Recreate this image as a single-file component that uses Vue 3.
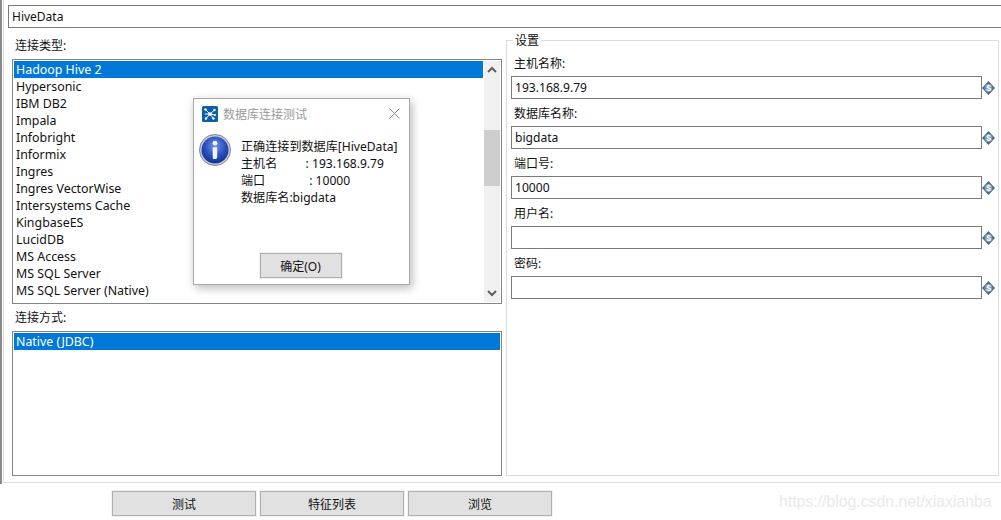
<script setup>
const types = ['Hadoop Hive 2','Hypersonic','IBM DB2','Impala','Infobright','Informix','Ingres','Ingres VectorWise','Intersystems Cache','KingbaseES','LucidDB','MS Access','MS SQL Server','MS SQL Server (Native)']
const fields = [
  { label: '主机名称:', value: '193.168.9.79' },
  { label: '数据库名称:', value: 'bigdata' },
  { label: '端口号:', value: '10000' },
  { label: '用户名:', value: '' },
  { label: '密码:', value: '' }
]
const buttons = ['测试', '特征列表', '浏览']
const message = [
  '正确连接到数据库[HiveData]',
  '主机名         : 193.168.9.79',
  '端口              : 10000',
  '数据库名:bigdata'
]
</script>

<template>
  <div class="page">
    <div class="edge">
      <div class="panel">
        <div class="name-input">HiveData</div>
        <div class="columns">
          <div class="left">
            <div class="label">连接类型:</div>
            <div class="list types">
              <div class="rows">
                <div v-for="(t, i) in types" :key="t" class="row" :class="{ sel: i === 0 }">{{ t }}</div>
              </div>
              <div class="scrollbar">
                <svg class="arrow" width="16" height="18" viewBox="0 0 16 18"><path d="M4 11 L8 7 L12 11" fill="none" stroke="#606060" stroke-width="2"/></svg>
                <div class="track"><div class="thumb"></div></div>
                <svg class="arrow" width="16" height="18" viewBox="0 0 16 18"><path d="M4 7 L8 11 L12 7" fill="none" stroke="#606060" stroke-width="2"/></svg>
              </div>
            </div>
            <div class="label second">连接方式:</div>
            <div class="list methods">
              <div class="rows">
                <div class="row sel">Native (JDBC)</div>
              </div>
            </div>
          </div>
          <div class="group">
            <div class="legend">设置</div>
            <div v-for="f in fields" :key="f.label" class="field">
              <div class="field-label">{{ f.label }}</div>
              <div class="field-line">
                <div class="field-input">{{ f.value }}</div>
                <svg class="var" width="13" height="14" viewBox="0 0 13 14">
                  <path d="M6.5 0 L13 7 L6.5 14 L0 7 Z" fill="#46698a"/>
                  <circle cx="6.5" cy="7" r="3.9" fill="#7f9ab2"/>
                  <text x="6.5" y="10" text-anchor="middle" font-size="8.5" font-weight="700" fill="#fff" font-family="Liberation Sans, sans-serif">$</text>
                </svg>
              </div>
            </div>
          </div>
        </div>
      </div>
    </div>

    <div class="actions">
      <button v-for="b in buttons" :key="b" class="btn">{{ b }}</button>
    </div>

    <div class="watermark">https://blog.csdn.net/xiaxianba</div>

    <div class="dialog">
      <div class="titlebar">
        <svg class="logo" width="16" height="16" viewBox="0 0 16 16">
          <rect width="16" height="16" rx="1.5" fill="#0b5ea8"/>
          <g stroke="#fff" stroke-width="1">
            <path d="M8 8 L3.5 3.5 M8 8 L12.5 4 M8 8 L13 9 M8 8 L4 12.5 M8 8 L11.5 12.5 M8 8 L2.8 8"/>
          </g>
          <g fill="#fff">
            <circle cx="8" cy="8" r="1.8"/><circle cx="3.5" cy="3.5" r="1.2"/><circle cx="12.5" cy="4" r="1.2"/>
            <circle cx="13" cy="9" r="1"/><circle cx="4" cy="12.5" r="1.2"/><circle cx="11.5" cy="12.5" r="1.2"/>
          </g>
        </svg>
        <span class="title">数据库连接测试</span>
        <svg class="close" width="11" height="11" viewBox="0 0 11 11"><path d="M0.5 0.5 L10.5 10.5 M10.5 0.5 L0.5 10.5" stroke="#8c8c8c" stroke-width="1" fill="none"/></svg>
      </div>
      <div class="message">
        <svg class="info" width="32" height="32" viewBox="0 0 32 32">
          <defs>
            <radialGradient id="ball" cx="50%" cy="35%" r="70%">
              <stop offset="0%" stop-color="#6f94e6"/>
              <stop offset="55%" stop-color="#2a50bd"/>
              <stop offset="100%" stop-color="#0d2a86"/>
            </radialGradient>
          </defs>
          <circle cx="16" cy="16" r="15.5" fill="#c7ccd6" stroke="#7c8494" stroke-width="1"/>
          <circle cx="16" cy="16" r="13.5" fill="url(#ball)"/>
          <circle cx="16" cy="9.2" r="2.4" fill="#f2f4fa"/>
          <path d="M13.6 13.2 H18.2 V23.4 C18.2 25 16 25.2 14.8 25 C14 24.8 13.8 24.2 13.8 23.4 Z" fill="#f2f4fa"/>
        </svg>
        <div class="msg-text">
          <div v-for="m in message" :key="m">{{ m }}</div>
        </div>
      </div>
      <div class="dialog-foot">
        <button class="ok">确定(O)</button>
      </div>
    </div>
  </div>
</template>

<style scoped>
.page {
  position: relative;
  width: 1001px;
  height: 520px;
  overflow: hidden;
  background: #fff;
  color: #111;
  font-family: "Noto Sans", "Noto Sans CJK SC", sans-serif;
  font-size: 12.4px;
}
.edge {
  border-left: 2px solid #8a8a8a;
  height: 484px;
  box-sizing: border-box;
  padding-left: 1px;
}
.panel {
  height: 483px;
  box-sizing: border-box;
  border-left: 1px solid #dcdcdc;
  border-bottom: 1px solid #dcdcdc;
  padding: 5px 0 0 4px;
}
.name-input {
  height: 23px;
  box-sizing: border-box;
  border: 1px solid #7a7a7a;
  border-right: none;
  padding-left: 3px;
  line-height: 21px;
  font-size: 12px;
}
.columns {
  display: flex;
  gap: 4px;
  margin-top: 9px;
  margin-left: 4px;
}
.left {
  width: 490px;
  display: flex;
  flex-direction: column;
}
.label {
  height: 17px;
  line-height: 17px;
  font-size: 12px;
  padding-left: 3px;
  margin-bottom: 5px;
}
.label.second {
  margin-top: 5px;
  margin-bottom: 5px;
}
.list {
  box-sizing: border-box;
  border: 1px solid #82878c;
  padding: 1px;
  display: flex;
}
.types { height: 245px; }
.methods { height: 145px; }
.rows {
  flex: 1;
  min-width: 0;
  overflow: hidden;
}
.row {
  height: 17px;
  line-height: 17px;
  padding-left: 2px;
}
.row.sel {
  background: #0078d7;
  color: #fff;
}
.scrollbar {
  width: 16px;
  margin-left: 1px;
  background: #f0f0f0;
  display: flex;
  flex-direction: column;
}
.arrow { display: block; flex: none; }
.track {
  flex: 1;
  padding-top: 51px;
}
.thumb {
  height: 56px;
  background: #cdcdcd;
}
.group {
  position: relative;
  width: 493px;
  height: 436px;
  margin-top: 3px;
  box-sizing: border-box;
  border: 1px solid #dcdcdc;
  padding: 14px 0 0 4px;
}
.legend {
  position: absolute;
  top: -7px;
  left: 6px;
  padding: 0 2px;
  background: #fff;
  font-size: 12px;
  line-height: 14px;
}
.field { margin-bottom: 6px; }
.field-label {
  height: 17px;
  line-height: 17px;
  font-size: 12px;
  padding-left: 3px;
  margin-bottom: 4px;
}
.field-line {
  display: flex;
  align-items: center;
}
.field-input {
  width: 471px;
  height: 23px;
  box-sizing: border-box;
  border: 1px solid #7a7a7a;
  padding-left: 3px;
  line-height: 21px;
  font-size: 12.1px;
}
.var { display: block; flex: none; }
.actions {
  display: flex;
  gap: 4px;
  padding: 7px 0 0 112px;
}
.btn, .ok {
  box-sizing: border-box;
  background: #e1e1e1;
  border: 1px solid #adadad;
  box-shadow: 0 0 0 1px #f3f3f3;
  padding: 0;
  color: #111;
  font-family: inherit;
  font-size: 12px;
}
.btn { width: 144px; height: 25px; }
.watermark {
  position: absolute;
  left: 779px;
  top: 492px;
  font-family: "Liberation Sans", sans-serif;
  font-size: 15.8px;
  line-height: 20px;
  color: #e9e9e9;
}
.dialog {
  position: absolute;
  left: 193px;
  top: 98px;
  width: 217px;
  height: 187px;
  box-sizing: border-box;
  background: #fff;
  border: 1px solid #a8a8a8;
  box-shadow: 2px 3px 9px rgba(0,0,0,.28);
  display: flex;
  flex-direction: column;
}
.titlebar {
  display: flex;
  align-items: center;
  height: 29px;
  padding: 0 9px 0 8px;
  flex: none;
}
.logo { display: block; flex: none; }
.title {
  margin-left: 5px;
  flex: 1;
  color: #9a9a9a;
  font-size: 12px;
}
.close { display: block; }
.message {
  display: flex;
  padding: 6px 0 0 5px;
  flex: 1;
}
.info { display: block; flex: none; }
.msg-text {
  margin-left: 10px;
  margin-top: 4px;
  white-space: pre;
  line-height: 17px;
  font-size: 12.1px;
}
.dialog-foot {
  display: flex;
  justify-content: center;
  padding: 0 2px 6px 0;
  flex: none;
}
.ok {
  width: 82px;
  height: 25px;
  box-shadow: 0 0 0 1px #f0f0f0;
}
</style>
